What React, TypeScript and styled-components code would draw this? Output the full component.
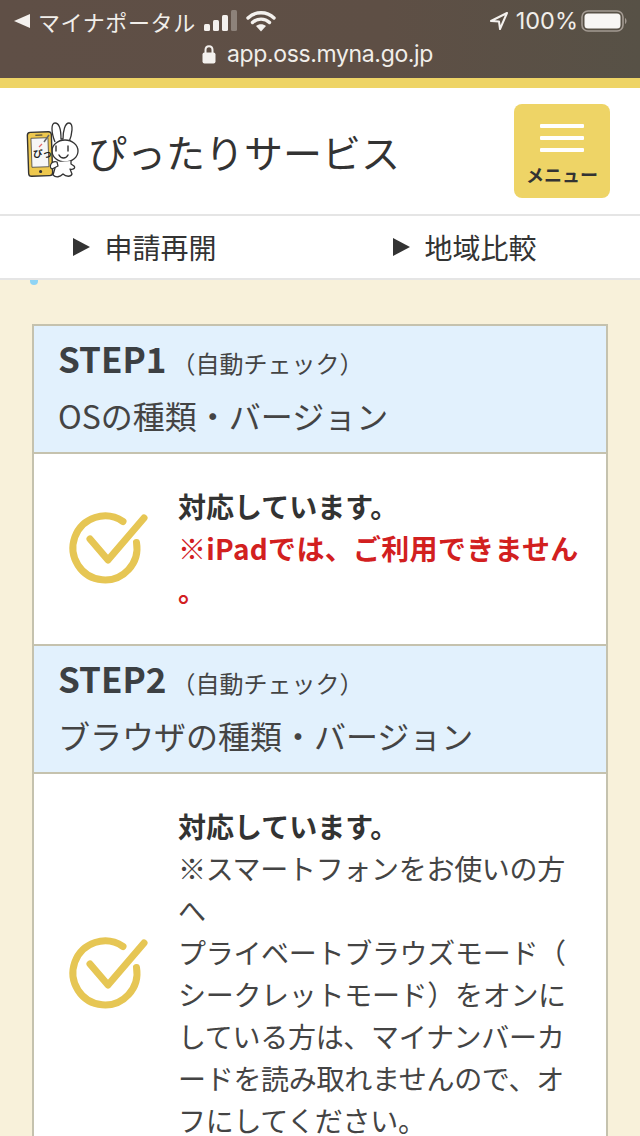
import { createGlobalStyle, styled } from 'styled-components';

const GlobalStyle = createGlobalStyle`
  html, body {
    margin: 0;
    padding: 0;
    background: #f8f1da;
  }

  body {
    font-family: "Noto Sans CJK JP", "Noto Sans", sans-serif;
    color: #333;
  }
`;

const Page = styled.div`
  width: 640px;
  height: 1136px;
  overflow: hidden;
  position: relative;
  background: #f8f1da;
`;

const StatusArea = styled.div`
  height: 78px;
  box-sizing: border-box;
  padding: 6px 13px 0 14px;
  background: linear-gradient(90deg, #5f4f46 0%, #5e4f45 60%, #575146 100%);
  color: #f1eeea;
`;

const StatusRow = styled.div`
  display: flex;
  align-items: center;
  justify-content: space-between;
  height: 30px;
`;

const StatusGroup = styled.div`
  display: flex;
  align-items: center;
  gap: 8px;
  font-size: 22px;
  line-height: 30px;
`;

const CarrierName = styled.span`
  letter-spacing: 0.6px;
`;

const Percent = styled.span`
  font-family: "Inter", sans-serif;
  font-size: 23.5px;
  margin-left: -1px;
  margin-right: -5px;
`;

const UrlRow = styled.div`
  display: flex;
  align-items: center;
  justify-content: center;
  gap: 11px;
  margin-top: 3px;
  padding-right: 6px;
  font-family: "Inter", sans-serif;
  font-size: 23px;
  line-height: 30px;
  letter-spacing: -0.35px;
`;

const Header = styled.header`
  display: flex;
  align-items: center;
  justify-content: space-between;
  height: 136px;
  box-sizing: border-box;
  padding: 0 30px 0 26px;
  background: #fff;
  border-top: 10px solid #eed466;
`;

const Brand = styled.div`
  display: flex;
  align-items: center;
  gap: 8px;
  font-size: 39px;
  line-height: 1;
  color: #333;
`;

const MenuButton = styled.button`
  display: flex;
  flex-direction: column;
  align-items: center;
  width: 96px;
  height: 94px;
  padding: 20px 0 0;
  border: 0;
  border-radius: 8px;
  background: #eed466;
  color: #333;
  font-family: inherit;
  font-size: 18px;
  font-weight: 700;
`;

const MenuBar = styled.span`
  display: block;
  width: 44px;
  height: 4px;
  margin-bottom: 8px;
  border-radius: 1px;
  background: #fff;
`;

const MenuLabel = styled.span`
  margin-top: 1px;
  line-height: 26px;
  white-space: nowrap;
`;

const Nav = styled.nav`
  display: grid;
  grid-template-columns: 1fr 1fr;
  height: 66px;
  box-sizing: border-box;
  border-top: 2px solid #e5e5e5;
  border-bottom: 2px solid #e5e5e5;
  background: #fff;
`;

const NavLink = styled.a`
  display: flex;
  align-items: center;
  justify-content: center;
  gap: 14px;
  padding-right: 30px;
  font-size: 28px;
  line-height: 62px;
  color: #333;
`;

const Arrow = styled.span`
  width: 0;
  height: 0;
  border-left: 17px solid #333;
  border-top: 9px solid transparent;
  border-bottom: 9px solid transparent;
`;

const Dot = styled.span`
  position: absolute;
  left: 30px;
  top: 280px;
  width: 8px;
  height: 5px;
  border-radius: 0 0 4px 4px;
  background: #8fd4f5;
`;

const Content = styled.main`
  padding: 44px 32px 0;
`;

const Steps = styled.section`
  border: 2px solid #c5c2ae;
  border-bottom: 0;
`;

const StepHead = styled.div`
  height: 128px;
  box-sizing: border-box;
  padding-left: 24px;
  background: #e2f1fd;
  border-bottom: 2px solid #c5c2ae;
`;

const StepTitle = styled.div`
  display: flex;
  align-items: baseline;
  height: 62px;
  line-height: 64px;
`;

const StepNumber = styled.span`
  font-size: 35px;
  font-weight: 700;
  color: #3c4043;
`;

const StepNote = styled.span`
  margin-left: 5px;
  font-size: 24px;
  line-height: 60px;
  color: #444;
`;

const StepName = styled.div`
  font-size: 32px;
  line-height: 48px;
  margin-top: 3px;
  color: #444;
  white-space: nowrap;
`;

const Result = styled.div<{ $last?: boolean }>`
  display: flex;
  align-items: center;
  box-sizing: border-box;
  padding: 31px 20px 33px 34px;
  background: #fff;
  border-bottom: ${(p) => (p.$last ? '0' : '2px solid #c5c2ae')};
`;

const CheckIcon = styled.svg`
  flex: none;
  width: 80px;
  height: 72px;
  margin-right: 30px;
  overflow: visible;
  filter: blur(0.6px);
`;

const ResultText = styled.div`
  font-size: 28px;
  line-height: 42px;
  letter-spacing: -0.3px;
  color: #444;
  line-break: anywhere;
`;

const Strong = styled.div`
  font-weight: 700;
  letter-spacing: 0;
  color: #333;
`;

const Warning = styled.div`
  font-weight: 700;
  letter-spacing: 0.3px;
  color: #d2201f;
`;

const Check = () => (
  <CheckIcon viewBox="0 0 80 72">
    <path
      d="M55 9.5 A32 32 0 1 0 68.5 30.5"
      fill="none"
      stroke="#e6c654"
      strokeWidth="7"
      strokeLinecap="round"
    />
    <path
      d="M22 27 L40 48 L76 6"
      fill="none"
      stroke="#e6c654"
      strokeWidth="7"
      strokeLinecap="round"
      strokeLinejoin="round"
    />
  </CheckIcon>
);

const Logo = () => (
  <svg width="54" height="58" viewBox="0 0 54 58">
    <path d="M29 20 C25 10 25 1 29 1 C34 1 35 10 35 17 L37 17 C37 9 39 1 43 1 C48 1 46 13 43 20" fill="#fff" stroke="#333" strokeWidth="1.3" strokeLinejoin="round" />
    <ellipse cx="39" cy="29" rx="13" ry="11" fill="#fff" stroke="#333" strokeWidth="1.3" />
    <path d="M30 24 V29 M42 24 V29 M33 33 C35 37 40 37 42 33" fill="none" stroke="#333" strokeWidth="1.4" strokeLinecap="round" />
    <path d="M31 40 L29 46 L27 53 C30 56 34 55 37 52 C40 55 45 55 46 52 L44 47 C47 48 50 46 48 44 L45 42 L45 39" fill="#fff" stroke="#333" strokeWidth="1.3" strokeLinejoin="round" />
    <g transform="rotate(-2 14 32)">
      <rect x="2" y="10" width="24" height="44" rx="3" fill="#eec84e" stroke="#333" strokeWidth="1.4" />
      <rect x="5.5" y="16" width="17" height="29" fill="#f6f6f6" stroke="#444" strokeWidth="0.8" />
      <rect x="10" y="12.5" width="7" height="1.2" fill="#333" />
      <circle cx="14" cy="49.5" r="1.6" fill="#333" />
    </g>
    <text x="7" y="35" fontSize="9.5" fontWeight="700" fill="#222">ぴっ</text>
    <path d="M13 25 L16 22" stroke="#e36a6a" strokeWidth="1.3" />
    <path d="M18 20 L23 13" stroke="#666" strokeWidth="1.5" />
    <path d="M25 42 C26 40 29 39 31 40 L32 44 L26 47 C24 46 24 44 25 42 Z" fill="#fff" stroke="#333" strokeWidth="1.2" />
  </svg>
);

export default function App() {
  return (
    <Page>
      <GlobalStyle />
      <StatusArea>
        <StatusRow>
          <StatusGroup>
            <svg width="16" height="14" viewBox="0 0 16 14">
              <path d="M16 0 V14 L0 7 Z" fill="#f4f1ee" />
            </svg>
            <CarrierName>マイナポータル</CarrierName>
            <svg width="34" height="22" viewBox="0 0 34 22">
              <rect x="0" y="14" width="6" height="7" rx="1.5" fill="#f4f1ee" />
              <rect x="9" y="10" width="6" height="11" rx="1.5" fill="#f4f1ee" />
              <rect x="18" y="5" width="6" height="16" rx="1.5" fill="#f4f1ee" />
              <rect x="27" y="0" width="6" height="21" rx="1.5" fill="#8d827a" />
            </svg>
            <svg width="30" height="22" viewBox="0 0 30 22">
              <path d="M2 8 C9 1 21 1 28 8 M6.5 12.5 C11 8 19 8 23.5 12.5" fill="none" stroke="#f4f1ee" strokeWidth="3.4" strokeLinecap="round" />
              <path d="M10 16 C13 13.5 17 13.5 20 16 L15 21.5 Z" fill="#f4f1ee" />
            </svg>
          </StatusGroup>
          <StatusGroup>
            <svg width="20" height="20" viewBox="0 0 20 20">
              <path d="M18 2 L2 10 L10 10.5 L11 18 Z" fill="none" stroke="#f4f1ee" strokeWidth="2" strokeLinejoin="round" />
            </svg>
            <Percent>100%</Percent>
            <svg width="46" height="24" viewBox="0 0 46 24">
              <rect x="1" y="2" width="41" height="20" rx="6" fill="none" stroke="#a39a92" strokeWidth="1.6" />
              <rect x="3.5" y="4.5" width="36" height="15" rx="3.5" fill="#f8f6f4" />
              <path d="M44 9 C46 10 46 14 44 15 Z" fill="#a39a92" />
            </svg>
          </StatusGroup>
        </StatusRow>
        <UrlRow>
          <svg width="14" height="20" viewBox="0 0 14 20">
            <path d="M3.5 9 V6 C3.5 1 10.5 1 10.5 6 V9" fill="none" stroke="#f4f1ee" strokeWidth="2" />
            <rect x="0.5" y="8.5" width="13" height="11" rx="2" fill="#f4f1ee" />
          </svg>
          <span>app.oss.myna.go.jp</span>
        </UrlRow>
      </StatusArea>
      <Header>
        <Brand>
          <Logo />
          <span>ぴったりサービス</span>
        </Brand>
        <MenuButton>
          <MenuBar />
          <MenuBar />
          <MenuBar />
          <MenuLabel>メニュー</MenuLabel>
        </MenuButton>
      </Header>
      <Nav>
        <NavLink>
          <Arrow />
          申請再開
        </NavLink>
        <NavLink>
          <Arrow />
          地域比較
        </NavLink>
      </Nav>
      <Dot />
      <Content>
        <Steps>
          <StepHead>
            <StepTitle>
              <StepNumber>STEP1</StepNumber>
              <StepNote>（自動チェック）</StepNote>
            </StepTitle>
            <StepName>OSの種類・バージョン</StepName>
          </StepHead>
          <Result>
            <Check />
            <ResultText>
              <Strong>対応しています。</Strong>
              <Warning>※iPadでは、ご利用できません。</Warning>
            </ResultText>
          </Result>
          <StepHead>
            <StepTitle>
              <StepNumber>STEP2</StepNumber>
              <StepNote>（自動チェック）</StepNote>
            </StepTitle>
            <StepName>ブラウザの種類・バージョン</StepName>
          </StepHead>
          <Result $last>
            <Check />
            <ResultText>
              <Strong>対応しています。</Strong>
              ※スマートフォンをお使いの方へ
              <br />
              プライベートブラウズモード（シークレットモード）をオンにしている方は、マイナンバーカードを読み取れませんので、オフにしてください。
            </ResultText>
          </Result>
        </Steps>
      </Content>
    </Page>
  );
}
